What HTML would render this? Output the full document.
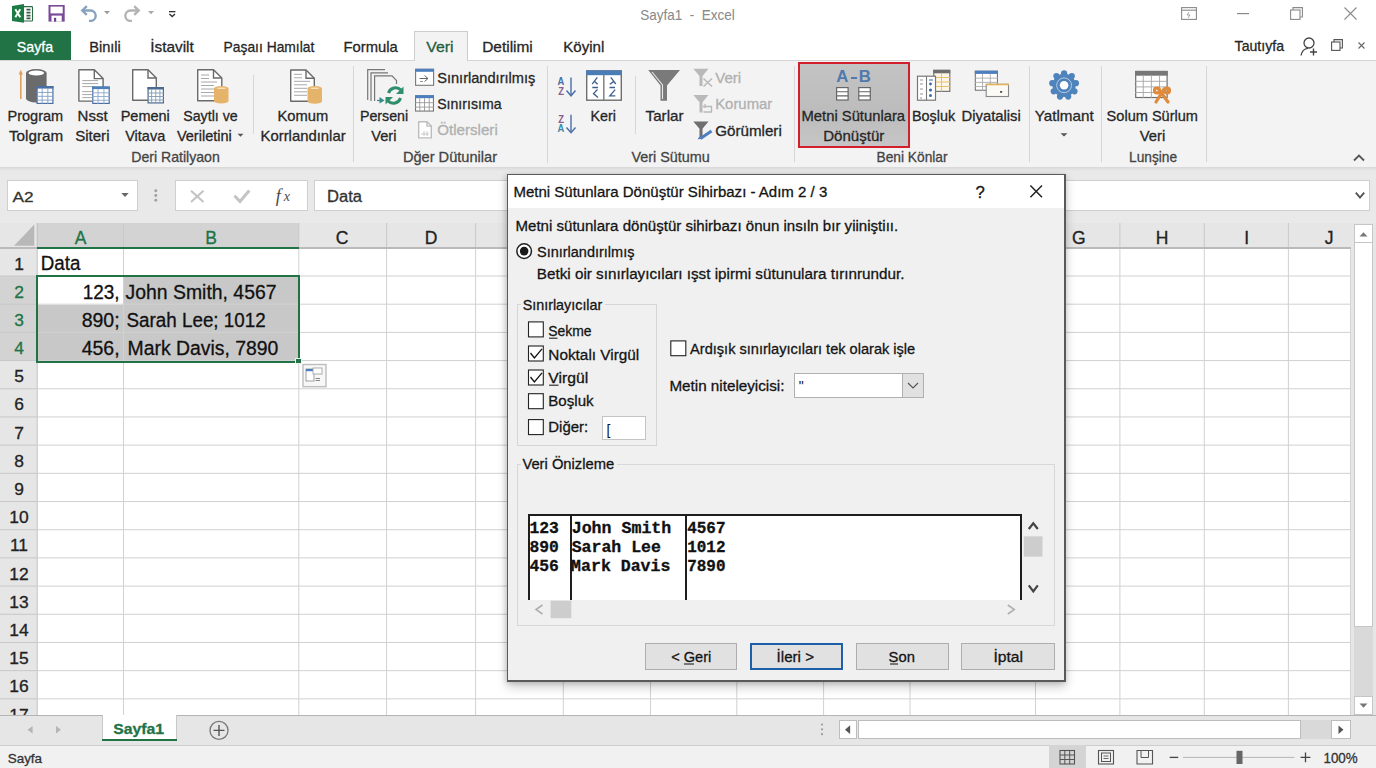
<!DOCTYPE html>
<html><head><meta charset="utf-8">
<style>
*{box-sizing:border-box}
html,body{margin:0;padding:0}
body{width:1376px;height:768px;position:relative;overflow:hidden;background:#fff;font-family:"Liberation Sans",sans-serif;color:#222}
.a{position:absolute}
.t{position:absolute;white-space:nowrap;line-height:1}
svg{position:absolute;overflow:visible}
svg.tx{pointer-events:none}
u{text-decoration:underline;text-underline-offset:2px}
</style></head><body>
<div class="a" style="left:0px;top:0px;width:1376px;height:60px;background:#fff"></div>
<div class="a" style="left:0px;top:60px;width:1376px;height:1px;background:#d5d5d5"></div>
<div class="a" style="left:0px;top:61px;width:1376px;height:106px;background:#f3f3f3"></div>
<div class="a" style="left:0px;top:167px;width:1376px;height:56px;background:#e9e9e9"></div>
<div class="a" style="left:0px;top:167px;width:1376px;height:4px;background:linear-gradient(#d8d8d8,#e9e9e9)"></div>
<div class="a" style="left:0px;top:223px;width:1376px;height:492px;background:#fff"></div>
<div class="a" style="left:0px;top:715px;width:1376px;height:30px;background:#e6e6e6"></div>
<div class="a" style="left:0px;top:715px;width:1376px;height:1px;background:#c8c8c8"></div>
<div class="a" style="left:0px;top:745px;width:1376px;height:23px;background:#f1f1f1"></div>
<div class="a" style="left:0px;top:744.6px;width:1376px;height:1.3px;background:#cdcdcd"></div>
<svg class="tx" style="left:0;top:0" width="1376" height="768"><text x="687.50" y="19.80" text-anchor="middle" font-size="15" font-weight="400" font-family="Liberation Sans" fill="#8a8a8a" stroke="#8a8a8a" stroke-width="0.05" textLength="94.6" lengthAdjust="spacingAndGlyphs" style="white-space:pre;">Sayfa1  -  Excel</text></svg>
<svg style="left:12px;top:4px;" width="21" height="19" viewBox="0 0 21 19">
<rect x="11.5" y="2.6" width="9" height="14.4" rx="0.8" fill="#fff" stroke="#2b6b45" stroke-width="1.1"/>
<path d="M14.5 5.6h4M14.5 8.6h4M14.5 11.6h4M14.5 14.4h4" stroke="#3a5a48" stroke-width="1.6"/>
<path d="M0 2 L12 0 V18.8 L0 17Z" fill="#1e7a45"/>
<path d="M3.3 5.2 L8.3 13.3 M8.3 5.2 L3.3 13.3" stroke="#f4fff8" stroke-width="2"/>
</svg>
<svg style="left:48px;top:5px;" width="17" height="17" viewBox="0 0 17 17">
<rect x="0.5" y="0" width="16.2" height="16.6" fill="#7a4a98"/>
<rect x="2.5" y="1.6" width="12.2" height="6.8" fill="#fff"/>
<rect x="3.5" y="10.6" width="10.2" height="6" fill="#fff"/>
<rect x="6" y="12.8" width="2.2" height="3.8" fill="#6a4088"/>
</svg>
<svg style="left:80px;top:5px;" width="18" height="17" viewBox="0 0 18 17"><path d="M3 5.5 H10.5 A5.2 5.2 0 0 1 10.5 15.9 H9" fill="none" stroke="#87a3bd" stroke-width="2.4"/><path d="M6.8 1.2 L2.3 5.5 L6.8 9.8" fill="none" stroke="#87a3bd" stroke-width="2.4"/></svg>
<svg style="left:104px;top:11px;" width="7" height="4" viewBox="0 0 7 4"><path d="M0 0H6L3 3.2Z" fill="#9a9a9a"/></svg>
<svg style="left:123px;top:5px;" width="18" height="17" viewBox="0 0 18 17"><path d="M15 5.5 H7.5 A5.2 5.2 0 0 0 7.5 15.9 H9" fill="none" stroke="#b3b3b3" stroke-width="2.4"/><path d="M11.2 1.2 L15.7 5.5 L11.2 9.8" fill="none" stroke="#b3b3b3" stroke-width="2.4"/></svg>
<svg style="left:147.5px;top:11px;" width="7" height="4" viewBox="0 0 7 4"><path d="M0 0H6L3 3.2Z" fill="#a8a8a8"/></svg>
<svg style="left:169px;top:11px;" width="7" height="7" viewBox="0 0 7 7"><rect x="0" y="0" width="6.4" height="1.3" fill="#333"/><path d="M0.4 3L3.2 5.6L6 3" fill="none" stroke="#333" stroke-width="1.4"/></svg>
<svg style="left:1181px;top:7px;" width="16" height="13" viewBox="0 0 16 13"><rect x="0.6" y="0.6" width="14.8" height="11.8" fill="none" stroke="#8a8a8a" stroke-width="1.1"/><path d="M0.6 3.2H15.4" stroke="#8a8a8a" stroke-width="1.1"/><path d="M8 5 L6 8 H9 L7 11" fill="none" stroke="#999" stroke-width="0.9"/></svg>
<svg style="left:1237px;top:13px;" width="12" height="1" viewBox="0 0 12 1"><rect x="0" y="0" width="12" height="1.2" fill="#8a8a8a"/></svg>
<svg style="left:1290px;top:7px;" width="13" height="13" viewBox="0 0 13 13"><rect x="0.6" y="3" width="9.4" height="9.4" fill="#fff" stroke="#8a8a8a" stroke-width="1.1"/><path d="M3 3V0.6H12.4V10H10" fill="none" stroke="#8a8a8a" stroke-width="1.1"/></svg>
<svg style="left:1344px;top:7px;" width="13" height="13" viewBox="0 0 13 13"><path d="M0.5 0.5L12.5 12.5M12.5 0.5L0.5 12.5" stroke="#8a8a8a" stroke-width="1.1"/></svg>
<div class="a" style="left:0px;top:31px;width:71px;height:29px;background:#217346"></div>
<svg class="tx" style="left:0;top:0" width="1376" height="768"><text x="34.95" y="51.50" text-anchor="middle" font-size="15" font-weight="400" font-family="Liberation Sans" fill="#fff" stroke="#fff" stroke-width="0.3" textLength="36.3" lengthAdjust="spacingAndGlyphs" style="white-space:pre;">Sayfa</text></svg>
<div class="a" style="left:413.5px;top:31px;width:54.5px;height:30px;background:#f3f3f3;border:1px solid #cdcdcd;border-bottom:none"></div>
<svg class="tx" style="left:0;top:0" width="1376" height="768"><text x="105.00" y="51.50" text-anchor="middle" font-size="15" font-weight="400" font-family="Liberation Sans" fill="#262626" stroke="#262626" stroke-width="0.3" textLength="31.6" lengthAdjust="spacingAndGlyphs" style="white-space:pre;">Binıli</text></svg>
<svg class="tx" style="left:0;top:0" width="1376" height="768"><text x="172.00" y="51.50" text-anchor="middle" font-size="15" font-weight="400" font-family="Liberation Sans" fill="#262626" stroke="#262626" stroke-width="0.3" textLength="43.6" lengthAdjust="spacingAndGlyphs" style="white-space:pre;">İstavilt</text></svg>
<svg class="tx" style="left:0;top:0" width="1376" height="768"><text x="268.95" y="51.50" text-anchor="middle" font-size="15" font-weight="400" font-family="Liberation Sans" fill="#262626" stroke="#262626" stroke-width="0.3" textLength="90.7" lengthAdjust="spacingAndGlyphs" style="white-space:pre;">Paşaıı Hamılat</text></svg>
<svg class="tx" style="left:0;top:0" width="1376" height="768"><text x="370.70" y="51.50" text-anchor="middle" font-size="15" font-weight="400" font-family="Liberation Sans" fill="#262626" stroke="#262626" stroke-width="0.3" textLength="54.2" lengthAdjust="spacingAndGlyphs" style="white-space:pre;">Formula</text></svg>
<svg class="tx" style="left:0;top:0" width="1376" height="768"><text x="439.85" y="51.50" text-anchor="middle" font-size="15" font-weight="400" font-family="Liberation Sans" fill="#1f6040" stroke="#1f6040" stroke-width="0.3" textLength="27.3" lengthAdjust="spacingAndGlyphs" style="white-space:pre;">Veri</text></svg>
<svg class="tx" style="left:0;top:0" width="1376" height="768"><text x="507.50" y="51.50" text-anchor="middle" font-size="15" font-weight="400" font-family="Liberation Sans" fill="#262626" stroke="#262626" stroke-width="0.3" textLength="50.6" lengthAdjust="spacingAndGlyphs" style="white-space:pre;">Detilimi</text></svg>
<svg class="tx" style="left:0;top:0" width="1376" height="768"><text x="583.75" y="51.50" text-anchor="middle" font-size="15" font-weight="400" font-family="Liberation Sans" fill="#262626" stroke="#262626" stroke-width="0.3" textLength="41.1" lengthAdjust="spacingAndGlyphs" style="white-space:pre;">Köyinl</text></svg>
<svg class="tx" style="left:0;top:0" width="1376" height="768"><text x="1259.30" y="51.00" text-anchor="middle" font-size="15" font-weight="400" font-family="Liberation Sans" fill="#262626" stroke="#262626" stroke-width="0.3" textLength="49.4" lengthAdjust="spacingAndGlyphs" style="white-space:pre;">Tautıyfa</text></svg>
<svg style="left:1300px;top:37px;" width="18" height="19" viewBox="0 0 18 19"><circle cx="9" cy="6" r="5" fill="none" stroke="#444" stroke-width="1.3"/><path d="M1 18.5 C2 13 5 11.5 8 11.3" fill="none" stroke="#444" stroke-width="1.3"/><path d="M13.5 11.5V18.5M10 15H17" stroke="#444" stroke-width="1.4"/></svg>
<svg style="left:1331px;top:39px;" width="12" height="12" viewBox="0 0 12 12"><rect x="0.6" y="3" width="8.4" height="8.4" fill="#fff" stroke="#555" stroke-width="1.1"/><path d="M3 3V0.6H11.4V9H9" fill="none" stroke="#555" stroke-width="1.1"/></svg>
<svg style="left:1358px;top:42px;" width="7" height="7" viewBox="0 0 7 7"><path d="M0.5 0.5L6.5 6.5M6.5 0.5L0.5 6.5" stroke="#666" stroke-width="1.1"/></svg>
<svg style="left:0;top:0" width="1376" height="200" viewBox="0 0 1376 200"><path d="M20.8 99V72" stroke="#e0a060" stroke-width="1.6"/><path d="M18.6 74.5L20.8 69.8L23 74.5Z" fill="#e0a060"/><path d="M26 73.0V98.5A10.3 4.0 0 0 0 46.6 98.5V73.0Z" fill="#6b6b6b"/><ellipse cx="36.3" cy="73.0" rx="10.3" ry="4.0" fill="#6b6b6b"/><ellipse cx="36.3" cy="73.0" rx="7.800000000000001" ry="2.5" fill="#fff"/><rect x="37.1" y="86.6" width="15.8" height="16.8" fill="#fff" stroke="#4a6fa5" stroke-width="1.2"/><rect x="36.5" y="86" width="17" height="2.6" fill="#4a6fa5"/><path d="M36.5 92.45H53.5" stroke="#7f9cc4" stroke-width="0.9"/><path d="M36.5 96.30H53.5" stroke="#7f9cc4" stroke-width="0.9"/><path d="M36.5 100.15H53.5" stroke="#7f9cc4" stroke-width="0.9"/><path d="M42.17 88.6V104" stroke="#7f9cc4" stroke-width="0.9"/><path d="M47.83 88.6V104" stroke="#7f9cc4" stroke-width="0.9"/><path d="M78.9 69.8H94.30000000000001L103.10000000000001 78.6V101.1H78.9Z" fill="#fff" stroke="#6a6a6a" stroke-width="1.4" stroke-linejoin="round"/><path d="M94.30000000000001 69.8V78.6H103.10000000000001" fill="none" stroke="#6a6a6a" stroke-width="1.4"/><path d="M82.2 80.6H98.2" stroke="#a8a8a8" stroke-width="1"/><path d="M82.2 83.6H98.2" stroke="#a8a8a8" stroke-width="1"/><path d="M82.2 86.6H94.2" stroke="#a8a8a8" stroke-width="1"/><path d="M82.2 91.6H92.2" stroke="#a8a8a8" stroke-width="1"/><path d="M82.2 94.6H92.2" stroke="#a8a8a8" stroke-width="1"/><path d="M82.2 97.6H92.2" stroke="#a8a8a8" stroke-width="1"/><rect x="92.8" y="87.1" width="16.400000000000002" height="16.3" fill="#fff" stroke="#4a6fa5" stroke-width="1.2"/><rect x="92.2" y="86.5" width="17.6" height="2.6" fill="#4a7fba"/><path d="M92.2 92.82H109.80000000000001" stroke="#8aa6cc" stroke-width="0.9"/><path d="M92.2 96.55H109.80000000000001" stroke="#8aa6cc" stroke-width="0.9"/><path d="M92.2 100.28H109.80000000000001" stroke="#8aa6cc" stroke-width="0.9"/><path d="M98.07 89.1V104.0" stroke="#8aa6cc" stroke-width="0.9"/><path d="M103.93 89.1V104.0" stroke="#8aa6cc" stroke-width="0.9"/><path d="M132.7 69.7H148L156.3 78V100.3H132.7Z" fill="#fff" stroke="#6a6a6a" stroke-width="1.4" stroke-linejoin="round"/><path d="M148 69.7V78H156.3" fill="none" stroke="#6a6a6a" stroke-width="1.4"/><rect x="148.1" y="87.6" width="15.3" height="15.3" fill="#fff" stroke="#4a6a90" stroke-width="1.2"/><rect x="147.5" y="87" width="16.5" height="2.5" fill="#4a6a90"/><path d="M147.5 93.00H164.0" stroke="#7f9ab8" stroke-width="0.9"/><path d="M147.5 96.50H164.0" stroke="#7f9ab8" stroke-width="0.9"/><path d="M147.5 100.00H164.0" stroke="#7f9ab8" stroke-width="0.9"/><path d="M151.62 89.5V103.5" stroke="#7f9ab8" stroke-width="0.9"/><path d="M155.75 89.5V103.5" stroke="#7f9ab8" stroke-width="0.9"/><path d="M159.88 89.5V103.5" stroke="#7f9ab8" stroke-width="0.9"/><path d="M197.7 69.7H213.5L221.8 78V100.8H197.7Z" fill="#fff" stroke="#6a6a6a" stroke-width="1.4" stroke-linejoin="round"/><path d="M213.5 69.7V78H221.8" fill="none" stroke="#6a6a6a" stroke-width="1.4"/><path d="M201 75H209" stroke="#a8a8a8" stroke-width="1"/><path d="M201 78.5H209" stroke="#a8a8a8" stroke-width="1"/><path d="M201 82H217" stroke="#a8a8a8" stroke-width="1"/><path d="M201 85.5H214" stroke="#a8a8a8" stroke-width="1"/><path d="M201 89H214" stroke="#a8a8a8" stroke-width="1"/><path d="M201 92.5H214" stroke="#a8a8a8" stroke-width="1"/><path d="M201 96H214" stroke="#a8a8a8" stroke-width="1"/><path d="M214 88.25V101.25A7.25 2.25 0 0 0 228.5 101.25V88.25Z" fill="#e5b46a"/><ellipse cx="221.25" cy="88.25" rx="7.25" ry="2.25" fill="#e5b46a"/><ellipse cx="221.25" cy="88.25" rx="4.75" ry="0.75" fill="#f6e3c0"/><path d="M290.7 70.0H306L314.3 78.3V101.3H290.7Z" fill="#fff" stroke="#6a6a6a" stroke-width="1.4" stroke-linejoin="round"/><path d="M306 70.0V78.3H314.3" fill="none" stroke="#6a6a6a" stroke-width="1.4"/><path d="M294 74.3H302" stroke="#a8a8a8" stroke-width="1"/><path d="M294 77.8H302" stroke="#a8a8a8" stroke-width="1"/><path d="M294 81.3H310" stroke="#a8a8a8" stroke-width="1"/><path d="M294 84.8H307" stroke="#a8a8a8" stroke-width="1"/><path d="M294 88.3H307" stroke="#a8a8a8" stroke-width="1"/><path d="M294 91.8H307" stroke="#a8a8a8" stroke-width="1"/><path d="M294 95.3H307" stroke="#a8a8a8" stroke-width="1"/><path d="M307.5 88.25V101.45A7.25 2.25 0 0 0 322.0 101.45V88.25Z" fill="#e5b46a"/><ellipse cx="314.75" cy="88.25" rx="7.25" ry="2.25" fill="#e5b46a"/><ellipse cx="314.75" cy="88.25" rx="4.75" ry="0.75" fill="#f6e3c0"/><path d="M367.7 100V69.7H385" fill="none" stroke="#777" stroke-width="1.2"/><path d="M371 101V72.8H388" fill="none" stroke="#777" stroke-width="1.2"/><path d="M374.6 101V75.8H392L396.5 80.5V84" fill="none" stroke="#777" stroke-width="1.2"/><path d="M377 100.5H381" stroke="#3a8a8a" stroke-width="1.2"/><path d="M379.5 97L384.5 100.5L379.5 103.5Z" fill="#3a8a8a"/><path d="M388.5 93 A7.5 7.5 0 0 1 401 90" fill="none" stroke="#2f8f6c" stroke-width="3"/><path d="M403.5 86.5V94H396Z" fill="#2f8f6c"/><path d="M400.5 98 A7.5 7.5 0 0 1 388 101" fill="none" stroke="#2f8f6c" stroke-width="3"/><path d="M385.5 104.5V97H393Z" fill="#2f8f6c"/><rect x="415.6" y="69.3" width="18" height="16" fill="#fff" stroke="#777" stroke-width="1.1"/><rect x="415" y="68.8" width="19" height="3" fill="#4d7fbf"/><path d="M419.5 78.5H428M424.5 75.5L428 78.5L424.5 81.5" fill="none" stroke="#666" stroke-width="1"/><path d="M420 81.5H423" stroke="#888" stroke-width="0.9"/><rect x="415.55" y="95.75" width="17.9" height="15.299999999999999" fill="#fff" stroke="#777" stroke-width="1.1"/><rect x="415" y="95.2" width="19" height="3" fill="#4d7fbf"/><path d="M415 102.67H434" stroke="#999" stroke-width="0.9"/><path d="M415 107.13H434" stroke="#999" stroke-width="0.9"/><path d="M419.75 98.2V111.6" stroke="#999" stroke-width="0.9"/><path d="M424.50 98.2V111.6" stroke="#999" stroke-width="0.9"/><path d="M429.25 98.2V111.6" stroke="#999" stroke-width="0.9"/><path d="M418.7 121.8H427L431.3 126.1V137.9H418.7Z" fill="#fff" stroke="#bdbdbd" stroke-width="1.4" stroke-linejoin="round"/><path d="M427 121.8V126.1H431.3" fill="none" stroke="#bdbdbd" stroke-width="1.4"/><path d="M421 134H429M424 131V136M427 131V136" stroke="#c8c8c8" stroke-width="1"/><path d="M571 77.6V95" stroke="#4a6ea8" stroke-width="1.4"/><path d="M566.5 90.5L571 95.8L575.5 90.5" fill="none" stroke="#4a6ea8" stroke-width="1.4"/><path d="M571 114.7V132" stroke="#4a6ea8" stroke-width="1.4"/><path d="M566.5 127.5L571 132.6L575.5 127.5" fill="none" stroke="#4a6ea8" stroke-width="1.4"/></svg>
<div class="t" style="left:61.40px;width:1000px;text-align:center;top:76.25px;font-size:11px;color:#4a6ea8;font-weight:700;font-family:'Liberation Sans';transform:scaleX(0.85)">A</div>
<div class="t" style="left:61.40px;width:1000px;text-align:center;top:86.15px;font-size:11px;color:#8a5c8a;font-weight:700;font-family:'Liberation Sans';transform:scaleX(0.85)">Z</div>
<div class="t" style="left:61.40px;width:1000px;text-align:center;top:113.95px;font-size:11px;color:#8a5c8a;font-weight:700;font-family:'Liberation Sans';transform:scaleX(0.85)">Z</div>
<div class="t" style="left:61.40px;width:1000px;text-align:center;top:122.95px;font-size:11px;color:#3a8aaa;font-weight:700;font-family:'Liberation Sans';transform:scaleX(0.85)">A</div>
<svg style="left:0;top:0" width="1376" height="200" viewBox="0 0 1376 200"><rect x="586.7" y="70.9" width="34.6" height="29.3" fill="#fff" stroke="#6e6e6e" stroke-width="1.4"/><rect x="586" y="70.4" width="36" height="4.8" fill="#4a7db5"/><path d="M603.8 75V100.5" stroke="#7a7a7a" stroke-width="1.4"/><path d="M597.3 77.4L592.2 84.2M594.4 81.2L597.6 84.2M592.3 87.5H598M597.5 89.5L593.5 93.6L598 97.4" fill="none" stroke="#3d5f8f" stroke-width="1.3"/><path d="M610.8 77.4L615.8 84M609.8 84.3L613.6 81.6M609.5 87.5H615M615.2 89.6L609.8 95.8H615.3" fill="none" stroke="#3d5f8f" stroke-width="1.3"/><path d="M648.2 70H680L667 85.5V100.8H660.5V85.5Z" fill="#7a7a7a"/><path d="M652 72L662.5 85V99" fill="none" stroke="#e8e8e8" stroke-width="1.1"/><path d="M693.3 68.7H708.5L702.5 76V86H699.5V76Z" fill="#b9b9b9"/><path d="M703.5 78.5L712 86.5M712 78.5L703.5 86.5" stroke="#b9b9b9" stroke-width="1.5"/><path d="M693.3 94.9H708.5L702.5 102.2V112.4H699.5V102.2Z" fill="#b9b9b9"/><path d="M703 106.5H711.5V112H703.5M705 104V108" fill="none" stroke="#b9b9b9" stroke-width="1.3"/><path d="M693.3 121.4H708.5L702.5 128.7V137.5H699.5V128.7Z" fill="#6f6f6f"/><path d="M700.5 138.5L711.5 131" stroke="#4d7fbf" stroke-width="3"/><path d="M700 136L697.5 139.3L701.5 139Z" fill="#4d7fbf"/></svg>
<div class="a" style="left:797.5px;top:62.2px;width:112.5px;height:85.6px;background:linear-gradient(180deg,#c3c3c3,#bcbcbc 60%,#c6c6c6);border:2.8px solid #d21f2b"></div>
<div class="t" style="left:342.20px;width:1000px;text-align:center;top:68.82px;font-size:16.8px;color:#5079ad;font-weight:700;font-family:'Liberation Sans';">A</div>
<div class="a" style="left:851px;top:76.6px;width:5.8px;height:2px;background:#5079ad"></div>
<div class="t" style="left:364.80px;width:1000px;text-align:center;top:68.82px;font-size:16.8px;color:#5079ad;font-weight:700;font-family:'Liberation Sans';">B</div>
<svg style="left:0;top:0" width="1376" height="200" viewBox="0 0 1376 200"><rect x="836.6" y="87.6" width="11.5" height="12.4" fill="#fff" stroke="#666" stroke-width="1.2"/><path d="M836.6 91.8H848.1M836.6 95.9H848.1" stroke="#666" stroke-width="1.1"/><rect x="858.8" y="87.6" width="11.5" height="12.4" fill="#fff" stroke="#666" stroke-width="1.2"/><path d="M858.8 91.8H870.3M858.8 95.9H870.3" stroke="#666" stroke-width="1.1"/><rect x="933.8" y="70.4" width="16" height="21" fill="#fdf6e6" stroke="#777" stroke-width="1.2"/><rect x="933.2" y="69.8" width="17" height="3.5" fill="#6e6e6e"/><path d="M933.2 77.5H950.2M933.2 82H950.2M933.2 86.5H950.2" stroke="#e8c070" stroke-width="1"/><path d="M941.5 73V91.5" stroke="#e8c070" stroke-width="1"/><rect x="917.5" y="76.2" width="18" height="24" fill="#fff" stroke="#777" stroke-width="1.2"/><path d="M926.5 76.2V100.2" stroke="#777" stroke-width="1.1"/><path d="M920 80H923M920 84H923M920 89H923M920 94H923M920 98H922" stroke="#8a8a8a" stroke-width="0.9"/><circle cx="930.5" cy="84" r="1.4" fill="#3a6aa8"/><circle cx="930.5" cy="90" r="1.6" fill="#3a6aa8"/><circle cx="930.5" cy="95.5" r="1.5" fill="#3a6aa8"/><path d="M929 80H933" stroke="#3a6aa8" stroke-width="1"/><rect x="975.3499999999999" y="71.25" width="22.099999999999998" height="19.0" fill="#fff" stroke="#777" stroke-width="1.1"/><rect x="974.8" y="70.7" width="23.2" height="3.2" fill="#4d7fbf"/><path d="M974.8 78.12H998.0" stroke="#aaa" stroke-width="0.9"/><path d="M974.8 82.35H998.0" stroke="#aaa" stroke-width="0.9"/><path d="M974.8 86.58H998.0" stroke="#aaa" stroke-width="0.9"/><path d="M982.53 73.9V90.80000000000001" stroke="#aaa" stroke-width="0.9"/><path d="M990.27 73.9V90.80000000000001" stroke="#aaa" stroke-width="0.9"/><rect x="986.2" y="84.3" width="22.3" height="12.2" fill="#fbfaf5" stroke="#888" stroke-width="1.1"/><path d="M985.7 84.5H1009" stroke="#e3b25f" stroke-width="1.6"/><rect x="1000" y="91" width="2.2" height="1.8" fill="#555"/><g transform="translate(1064.1 85.3)" fill="#4f83bb"><circle cx="0.00" cy="-12.00" r="3.1"/><circle cx="7.71" cy="-9.19" r="3.1"/><circle cx="11.82" cy="-2.08" r="3.1"/><circle cx="10.39" cy="6.00" r="3.1"/><circle cx="4.10" cy="11.28" r="3.1"/><circle cx="-4.10" cy="11.28" r="3.1"/><circle cx="-10.39" cy="6.00" r="3.1"/><circle cx="-11.82" cy="-2.08" r="3.1"/><circle cx="-7.71" cy="-9.19" r="3.1"/><circle r="11.6"/></g><circle cx="1064.1" cy="85.3" r="7.4" fill="none" stroke="#b3cbe4" stroke-width="1"/><circle cx="1064.1" cy="85.3" r="4.3" fill="#fff"/><rect x="1135.6999999999998" y="71.5" width="31.400000000000002" height="26.0" fill="#fff" stroke="#6e6e6e" stroke-width="1.2"/><rect x="1135.1" y="70.9" width="32.6" height="4.8" fill="#777"/><path d="M1135.1 81.30H1167.6999999999998" stroke="#a5a5a5" stroke-width="0.9"/><path d="M1135.1 86.90H1167.6999999999998" stroke="#a5a5a5" stroke-width="0.9"/><path d="M1135.1 92.50H1167.6999999999998" stroke="#a5a5a5" stroke-width="0.9"/><path d="M1143.25 75.7V98.10000000000001" stroke="#a5a5a5" stroke-width="0.9"/><path d="M1151.40 75.7V98.10000000000001" stroke="#a5a5a5" stroke-width="0.9"/><path d="M1159.55 75.7V98.10000000000001" stroke="#a5a5a5" stroke-width="0.9"/><g stroke="#e08a3c" stroke-width="3.2" fill="none" stroke-linecap="round"><path d="M1156 102L1164 89"/><path d="M1168 102L1158.5 89"/><circle cx="1157" cy="90.5" r="2.5"/><circle cx="1167" cy="90.5" r="2.5"/></g><path d="M237.5 133.8H243.5L240.5 136.8Z" fill="#555"/><path d="M1060.5 133.3H1067.5L1064 136.6Z" fill="#555"/><path d="M1354 160.5L1359 155.5L1364 160.5" fill="none" stroke="#555" stroke-width="1.8"/></svg>
<div class="a" style="left:253.0px;top:75px;width:1px;height:59px;background:#d6d6d6"></div>
<div class="a" style="left:353.0px;top:66px;width:1px;height:96px;background:#d6d6d6"></div>
<div class="a" style="left:546.5px;top:66px;width:1px;height:97px;background:#d6d6d6"></div>
<div class="a" style="left:635.0px;top:76px;width:1px;height:58px;background:#d6d6d6"></div>
<div class="a" style="left:794.0px;top:66px;width:1px;height:96px;background:#d6d6d6"></div>
<div class="a" style="left:1028.5px;top:66px;width:1px;height:96px;background:#d6d6d6"></div>
<div class="a" style="left:1100.5px;top:66px;width:1px;height:96px;background:#d6d6d6"></div>
<div class="a" style="left:1206.0px;top:66px;width:1px;height:96px;background:#d6d6d6"></div>
<svg class="tx" style="left:0;top:0" width="1376" height="768"><text x="35.35" y="120.80" text-anchor="middle" font-size="14.8" font-weight="400" font-family="Liberation Sans" fill="#262626" stroke="#262626" stroke-width="0.3" textLength="55.7" lengthAdjust="spacingAndGlyphs" style="white-space:pre;">Program</text></svg>
<svg class="tx" style="left:0;top:0" width="1376" height="768"><text x="36.10" y="140.50" text-anchor="middle" font-size="14.8" font-weight="400" font-family="Liberation Sans" fill="#262626" stroke="#262626" stroke-width="0.3" textLength="54.2" lengthAdjust="spacingAndGlyphs" style="white-space:pre;">Tolgram</text></svg>
<svg class="tx" style="left:0;top:0" width="1376" height="768"><text x="92.60" y="120.80" text-anchor="middle" font-size="14.8" font-weight="400" font-family="Liberation Sans" fill="#262626" stroke="#262626" stroke-width="0.3" textLength="30.0" lengthAdjust="spacingAndGlyphs" style="white-space:pre;">Nsst</text></svg>
<svg class="tx" style="left:0;top:0" width="1376" height="768"><text x="92.35" y="140.50" text-anchor="middle" font-size="14.8" font-weight="400" font-family="Liberation Sans" fill="#262626" stroke="#262626" stroke-width="0.3" textLength="34.3" lengthAdjust="spacingAndGlyphs" style="white-space:pre;">Siteri</text></svg>
<svg class="tx" style="left:0;top:0" width="1376" height="768"><text x="145.25" y="120.80" text-anchor="middle" font-size="14.8" font-weight="400" font-family="Liberation Sans" fill="#262626" stroke="#262626" stroke-width="0.3" textLength="49.1" lengthAdjust="spacingAndGlyphs" style="white-space:pre;">Pemeni</text></svg>
<svg class="tx" style="left:0;top:0" width="1376" height="768"><text x="145.25" y="140.50" text-anchor="middle" font-size="14.8" font-weight="400" font-family="Liberation Sans" fill="#262626" stroke="#262626" stroke-width="0.3" textLength="40.1" lengthAdjust="spacingAndGlyphs" style="white-space:pre;">Vitava</text></svg>
<svg class="tx" style="left:0;top:0" width="1376" height="768"><text x="210.50" y="120.80" text-anchor="middle" font-size="14.8" font-weight="400" font-family="Liberation Sans" fill="#262626" stroke="#262626" stroke-width="0.3" textLength="54.6" lengthAdjust="spacingAndGlyphs" style="white-space:pre;">Saytlı ve</text></svg>
<svg class="tx" style="left:0;top:0" width="1376" height="768"><text x="204.35" y="140.50" text-anchor="middle" font-size="14.8" font-weight="400" font-family="Liberation Sans" fill="#262626" stroke="#262626" stroke-width="0.3" textLength="54.9" lengthAdjust="spacingAndGlyphs" style="white-space:pre;">Veriletini</text></svg>
<svg class="tx" style="left:0;top:0" width="1376" height="768"><text x="302.85" y="120.80" text-anchor="middle" font-size="14.8" font-weight="400" font-family="Liberation Sans" fill="#262626" stroke="#262626" stroke-width="0.3" textLength="50.7" lengthAdjust="spacingAndGlyphs" style="white-space:pre;">Komum</text></svg>
<svg class="tx" style="left:0;top:0" width="1376" height="768"><text x="303.05" y="140.50" text-anchor="middle" font-size="14.8" font-weight="400" font-family="Liberation Sans" fill="#262626" stroke="#262626" stroke-width="0.3" textLength="85.1" lengthAdjust="spacingAndGlyphs" style="white-space:pre;">Korrlandınlar</text></svg>
<svg class="tx" style="left:0;top:0" width="1376" height="768"><text x="384.05" y="120.80" text-anchor="middle" font-size="14.8" font-weight="400" font-family="Liberation Sans" fill="#262626" stroke="#262626" stroke-width="0.3" textLength="48.3" lengthAdjust="spacingAndGlyphs" style="white-space:pre;">Perseni</text></svg>
<svg class="tx" style="left:0;top:0" width="1376" height="768"><text x="383.80" y="140.50" text-anchor="middle" font-size="14.8" font-weight="400" font-family="Liberation Sans" fill="#262626" stroke="#262626" stroke-width="0.3" textLength="25.2" lengthAdjust="spacingAndGlyphs" style="white-space:pre;">Veri</text></svg>
<svg class="tx" style="left:0;top:0" width="1376" height="768"><text x="603.30" y="120.80" text-anchor="middle" font-size="14.8" font-weight="400" font-family="Liberation Sans" fill="#262626" stroke="#262626" stroke-width="0.3" textLength="25.4" lengthAdjust="spacingAndGlyphs" style="white-space:pre;">Keri</text></svg>
<svg class="tx" style="left:0;top:0" width="1376" height="768"><text x="664.55" y="120.80" text-anchor="middle" font-size="14.8" font-weight="400" font-family="Liberation Sans" fill="#262626" stroke="#262626" stroke-width="0.3" textLength="37.9" lengthAdjust="spacingAndGlyphs" style="white-space:pre;">Tarlar</text></svg>
<svg class="tx" style="left:0;top:0" width="1376" height="768"><text x="853.30" y="120.80" text-anchor="middle" font-size="14.8" font-weight="400" font-family="Liberation Sans" fill="#262626" stroke="#262626" stroke-width="0.3" textLength="103.6" lengthAdjust="spacingAndGlyphs" style="white-space:pre;">Metni Sütunlara</text></svg>
<svg class="tx" style="left:0;top:0" width="1376" height="768"><text x="853.75" y="140.50" text-anchor="middle" font-size="14.8" font-weight="400" font-family="Liberation Sans" fill="#262626" stroke="#262626" stroke-width="0.3" textLength="61.1" lengthAdjust="spacingAndGlyphs" style="white-space:pre;">Dönüştür</text></svg>
<svg class="tx" style="left:0;top:0" width="1376" height="768"><text x="933.60" y="120.80" text-anchor="middle" font-size="14.8" font-weight="400" font-family="Liberation Sans" fill="#262626" stroke="#262626" stroke-width="0.3" textLength="43.2" lengthAdjust="spacingAndGlyphs" style="white-space:pre;">Boşluk</text></svg>
<svg class="tx" style="left:0;top:0" width="1376" height="768"><text x="991.15" y="120.80" text-anchor="middle" font-size="14.8" font-weight="400" font-family="Liberation Sans" fill="#262626" stroke="#262626" stroke-width="0.3" textLength="59.3" lengthAdjust="spacingAndGlyphs" style="white-space:pre;">Diyatalisi</text></svg>
<svg class="tx" style="left:0;top:0" width="1376" height="768"><text x="1064.20" y="120.80" text-anchor="middle" font-size="14.8" font-weight="400" font-family="Liberation Sans" fill="#262626" stroke="#262626" stroke-width="0.3" textLength="59.0" lengthAdjust="spacingAndGlyphs" style="white-space:pre;">Yatlmant</text></svg>
<svg class="tx" style="left:0;top:0" width="1376" height="768"><text x="1152.30" y="120.80" text-anchor="middle" font-size="14.8" font-weight="400" font-family="Liberation Sans" fill="#262626" stroke="#262626" stroke-width="0.3" textLength="91.4" lengthAdjust="spacingAndGlyphs" style="white-space:pre;">Solum Sürlum</text></svg>
<svg class="tx" style="left:0;top:0" width="1376" height="768"><text x="1152.55" y="140.50" text-anchor="middle" font-size="14.8" font-weight="400" font-family="Liberation Sans" fill="#262626" stroke="#262626" stroke-width="0.3" textLength="25.5" lengthAdjust="spacingAndGlyphs" style="white-space:pre;">Veri</text></svg>
<svg class="tx" style="left:0;top:0" width="1376" height="768"><text x="486.25" y="82.60" text-anchor="middle" font-size="14.8" font-weight="400" font-family="Liberation Sans" fill="#262626" stroke="#262626" stroke-width="0.3" textLength="98.1" lengthAdjust="spacingAndGlyphs" style="white-space:pre;">Sınırlandırılmış</text></svg>
<svg class="tx" style="left:0;top:0" width="1376" height="768"><text x="469.35" y="109.20" text-anchor="middle" font-size="14.8" font-weight="400" font-family="Liberation Sans" fill="#262626" stroke="#262626" stroke-width="0.3" textLength="64.3" lengthAdjust="spacingAndGlyphs" style="white-space:pre;">Sınırısıma</text></svg>
<svg class="tx" style="left:0;top:0" width="1376" height="768"><text x="467.50" y="135.40" text-anchor="middle" font-size="14.8" font-weight="400" font-family="Liberation Sans" fill="#b0b0b0" stroke="#b0b0b0" stroke-width="0.3" textLength="60.6" lengthAdjust="spacingAndGlyphs" style="white-space:pre;">Ötlersleri</text></svg>
<svg class="tx" style="left:0;top:0" width="1376" height="768"><text x="728.15" y="82.60" text-anchor="middle" font-size="14.8" font-weight="400" font-family="Liberation Sans" fill="#b0b0b0" stroke="#b0b0b0" stroke-width="0.3" textLength="25.9" lengthAdjust="spacingAndGlyphs" style="white-space:pre;">Veri</text></svg>
<svg class="tx" style="left:0;top:0" width="1376" height="768"><text x="743.75" y="109.40" text-anchor="middle" font-size="14.8" font-weight="400" font-family="Liberation Sans" fill="#b0b0b0" stroke="#b0b0b0" stroke-width="0.3" textLength="57.1" lengthAdjust="spacingAndGlyphs" style="white-space:pre;">Korumar</text></svg>
<svg class="tx" style="left:0;top:0" width="1376" height="768"><text x="748.50" y="135.50" text-anchor="middle" font-size="14.8" font-weight="400" font-family="Liberation Sans" fill="#262626" stroke="#262626" stroke-width="0.3" textLength="66.6" lengthAdjust="spacingAndGlyphs" style="white-space:pre;">Görümleri</text></svg>
<svg class="tx" style="left:0;top:0" width="1376" height="768"><text x="175.50" y="162.00" text-anchor="middle" font-size="14.8" font-weight="400" font-family="Liberation Sans" fill="#444" stroke="#444" stroke-width="0.3" textLength="88.6" lengthAdjust="spacingAndGlyphs" style="white-space:pre;">Deri Ratilyaon</text></svg>
<svg class="tx" style="left:0;top:0" width="1376" height="768"><text x="450.00" y="162.00" text-anchor="middle" font-size="14.8" font-weight="400" font-family="Liberation Sans" fill="#444" stroke="#444" stroke-width="0.3" textLength="94.2" lengthAdjust="spacingAndGlyphs" style="white-space:pre;">Dğer Dütunilar</text></svg>
<svg class="tx" style="left:0;top:0" width="1376" height="768"><text x="670.65" y="162.00" text-anchor="middle" font-size="14.8" font-weight="400" font-family="Liberation Sans" fill="#444" stroke="#444" stroke-width="0.3" textLength="78.5" lengthAdjust="spacingAndGlyphs" style="white-space:pre;">Veri Sütumu</text></svg>
<svg class="tx" style="left:0;top:0" width="1376" height="768"><text x="912.05" y="162.00" text-anchor="middle" font-size="14.8" font-weight="400" font-family="Liberation Sans" fill="#444" stroke="#444" stroke-width="0.3" textLength="71.1" lengthAdjust="spacingAndGlyphs" style="white-space:pre;">Beni Könlar</text></svg>
<svg class="tx" style="left:0;top:0" width="1376" height="768"><text x="1153.05" y="162.00" text-anchor="middle" font-size="14.8" font-weight="400" font-family="Liberation Sans" fill="#444" stroke="#444" stroke-width="0.3" textLength="48.1" lengthAdjust="spacingAndGlyphs" style="white-space:pre;">Lunşine</text></svg>
<div class="a" style="left:6.5px;top:180px;width:131px;height:30.6px;background:#fff;border:1px solid #cfcfcf"></div>
<div class="a" style="left:175px;top:180px;width:133.3px;height:30.6px;background:#fff;border:1px solid #cfcfcf"></div>
<div class="a" style="left:313.5px;top:180px;width:1056px;height:30.6px;background:#fff;border:1px solid #cfcfcf"></div>
<svg class="tx" style="left:0;top:0" width="1376" height="768"><text x="23.05" y="201.60" text-anchor="middle" font-size="15.5" font-weight="400" font-family="Liberation Sans" fill="#333" stroke="#333" stroke-width="0.3" textLength="21.1" lengthAdjust="spacingAndGlyphs" style="white-space:pre;">A2</text></svg>
<svg style="left:0;top:0" width="1376" height="260" viewBox="0 0 1376 260"><path d="M121.3 193H128.7L125 197Z" fill="#666"/><circle cx="155.8" cy="190.8" r="1.45" fill="#a0a0a0"/><circle cx="155.8" cy="195.5" r="1.45" fill="#a0a0a0"/><circle cx="155.8" cy="200.2" r="1.45" fill="#a0a0a0"/><path d="M191 190.8L203.5 202M203.5 190.8L191 202" stroke="#c2c2c2" stroke-width="2"/><path d="M234.5 195.8L240 201.5L249.3 190.5" fill="none" stroke="#c4c4c4" stroke-width="3"/><path d="M1355.8 192.6L1360 197.6L1364.2 192.6" fill="none" stroke="#555" stroke-width="1.9"/></svg>
<div class="t" style="left:275.70px;top:187.00px;font-size:18px;color:#4a4a4a;font-weight:400;font-family:'Liberation Serif';font-style:italic">f</div>
<div class="t" style="left:283.70px;top:190.30px;font-size:14px;color:#4a4a4a;font-weight:400;font-family:'Liberation Serif';font-style:italic">x</div>
<svg class="tx" style="left:0;top:0" width="1376" height="768"><text x="344.50" y="201.80" text-anchor="middle" font-size="16" font-weight="400" font-family="Liberation Sans" fill="#333" stroke="#333" stroke-width="0.3" textLength="35.0" lengthAdjust="spacingAndGlyphs" style="white-space:pre;">Data</text></svg>
<div class="a" style="left:0px;top:223px;width:37.2px;height:492px;background:#e6e6e6"></div>
<div class="a" style="left:37.2px;top:223px;width:1313.4px;height:25px;background:#e6e6e6"></div>
<div class="a" style="left:37.2px;top:223px;width:261.6px;height:25px;background:#d3d3d3"></div>
<div class="a" style="left:0px;top:276px;width:37.2px;height:85.4px;background:#d3d3d3"></div>
<svg style="left:0;top:0" width="1376" height="768" viewBox="0 0 1376 768"><path d="M14 245.8L34.3 224.6V245.8Z" fill="#b8b8b8"/><path d="M123.5 223V248" stroke="#c9c9c9" stroke-width="1"/><path d="M298.8 223V248" stroke="#c9c9c9" stroke-width="1"/><path d="M386.6 223V248" stroke="#c9c9c9" stroke-width="1"/><path d="M475.6 223V248" stroke="#c9c9c9" stroke-width="1"/><path d="M563.3 223V248" stroke="#c9c9c9" stroke-width="1"/><path d="M1119.9 223V248" stroke="#c9c9c9" stroke-width="1"/><path d="M1204.3 223V248" stroke="#c9c9c9" stroke-width="1"/><path d="M1288.4 223V248" stroke="#c9c9c9" stroke-width="1"/><path d="M37.2 223V715" stroke="#c0c0c0" stroke-width="1"/></svg>
<div class="a" style="left:123.5px;top:276px;width:175.3px;height:85.4px;background:#c8c8c8"></div>
<div class="a" style="left:37.2px;top:304.5px;width:86.3px;height:56.9px;background:#c8c8c8"></div>
<svg style="left:0;top:0" width="1376" height="768" viewBox="0 0 1376 768"><path d="M37.2 276.00H1350.6" stroke="#d1d1d1" stroke-width="1"/><path d="M0 276.00H37.2" stroke="#c8c8c8" stroke-width="1"/><path d="M37.2 304.19H1350.6" stroke="#d1d1d1" stroke-width="1"/><path d="M0 304.19H37.2" stroke="#c8c8c8" stroke-width="1"/><path d="M37.2 332.38H1350.6" stroke="#d1d1d1" stroke-width="1"/><path d="M0 332.38H37.2" stroke="#c8c8c8" stroke-width="1"/><path d="M37.2 360.57H1350.6" stroke="#d1d1d1" stroke-width="1"/><path d="M0 360.57H37.2" stroke="#c8c8c8" stroke-width="1"/><path d="M37.2 388.76H1350.6" stroke="#d1d1d1" stroke-width="1"/><path d="M0 388.76H37.2" stroke="#c8c8c8" stroke-width="1"/><path d="M37.2 416.95H1350.6" stroke="#d1d1d1" stroke-width="1"/><path d="M0 416.95H37.2" stroke="#c8c8c8" stroke-width="1"/><path d="M37.2 445.14H1350.6" stroke="#d1d1d1" stroke-width="1"/><path d="M0 445.14H37.2" stroke="#c8c8c8" stroke-width="1"/><path d="M37.2 473.33H1350.6" stroke="#d1d1d1" stroke-width="1"/><path d="M0 473.33H37.2" stroke="#c8c8c8" stroke-width="1"/><path d="M37.2 501.52H1350.6" stroke="#d1d1d1" stroke-width="1"/><path d="M0 501.52H37.2" stroke="#c8c8c8" stroke-width="1"/><path d="M37.2 529.71H1350.6" stroke="#d1d1d1" stroke-width="1"/><path d="M0 529.71H37.2" stroke="#c8c8c8" stroke-width="1"/><path d="M37.2 557.90H1350.6" stroke="#d1d1d1" stroke-width="1"/><path d="M0 557.90H37.2" stroke="#c8c8c8" stroke-width="1"/><path d="M37.2 586.09H1350.6" stroke="#d1d1d1" stroke-width="1"/><path d="M0 586.09H37.2" stroke="#c8c8c8" stroke-width="1"/><path d="M37.2 614.28H1350.6" stroke="#d1d1d1" stroke-width="1"/><path d="M0 614.28H37.2" stroke="#c8c8c8" stroke-width="1"/><path d="M37.2 642.47H1350.6" stroke="#d1d1d1" stroke-width="1"/><path d="M0 642.47H37.2" stroke="#c8c8c8" stroke-width="1"/><path d="M37.2 670.66H1350.6" stroke="#d1d1d1" stroke-width="1"/><path d="M0 670.66H37.2" stroke="#c8c8c8" stroke-width="1"/><path d="M37.2 698.85H1350.6" stroke="#d1d1d1" stroke-width="1"/><path d="M0 698.85H37.2" stroke="#c8c8c8" stroke-width="1"/><path d="M123.5 248V715" stroke="#d1d1d1" stroke-width="1"/><path d="M298.8 248V715" stroke="#d1d1d1" stroke-width="1"/><path d="M386.6 248V715" stroke="#d1d1d1" stroke-width="1"/><path d="M475.6 248V715" stroke="#d1d1d1" stroke-width="1"/><path d="M563.3 248V715" stroke="#d1d1d1" stroke-width="1"/><path d="M650.5 248V715" stroke="#d1d1d1" stroke-width="1"/><path d="M736.8 248V715" stroke="#d1d1d1" stroke-width="1"/><path d="M823.6 248V715" stroke="#d1d1d1" stroke-width="1"/><path d="M910 248V715" stroke="#d1d1d1" stroke-width="1"/><path d="M1035.5 248V715" stroke="#d1d1d1" stroke-width="1"/><path d="M1119.9 248V715" stroke="#d1d1d1" stroke-width="1"/><path d="M1204.3 248V715" stroke="#d1d1d1" stroke-width="1"/><path d="M1288.4 248V715" stroke="#d1d1d1" stroke-width="1"/><path d="M1350.6 248V715" stroke="#d1d1d1" stroke-width="1"/></svg>
<div class="a" style="left:0px;top:247.3px;width:1350.6px;height:1.4px;background:#bababa"></div>
<div class="a" style="left:37.2px;top:247px;width:261.6px;height:2px;background:#217346"></div>
<svg class="tx" style="left:0;top:0" width="1376" height="768"><text x="80.60" y="243.80" text-anchor="middle" font-size="17.5" font-weight="400" font-family="Liberation Sans" fill="#217346" stroke="#217346" stroke-width="0.3" style="white-space:pre;">A</text></svg>
<svg class="tx" style="left:0;top:0" width="1376" height="768"><text x="211.00" y="243.80" text-anchor="middle" font-size="17.5" font-weight="400" font-family="Liberation Sans" fill="#217346" stroke="#217346" stroke-width="0.3" style="white-space:pre;">B</text></svg>
<svg class="tx" style="left:0;top:0" width="1376" height="768"><text x="342.00" y="243.80" text-anchor="middle" font-size="17.5" font-weight="400" font-family="Liberation Sans" fill="#222" stroke="#222" stroke-width="0.3" style="white-space:pre;">C</text></svg>
<svg class="tx" style="left:0;top:0" width="1376" height="768"><text x="431.00" y="243.80" text-anchor="middle" font-size="17.5" font-weight="400" font-family="Liberation Sans" fill="#222" stroke="#222" stroke-width="0.3" style="white-space:pre;">D</text></svg>
<svg class="tx" style="left:0;top:0" width="1376" height="768"><text x="1078.80" y="243.80" text-anchor="middle" font-size="17.5" font-weight="400" font-family="Liberation Sans" fill="#222" stroke="#222" stroke-width="0.3" style="white-space:pre;">G</text></svg>
<svg class="tx" style="left:0;top:0" width="1376" height="768"><text x="1162.00" y="243.80" text-anchor="middle" font-size="17.5" font-weight="400" font-family="Liberation Sans" fill="#222" stroke="#222" stroke-width="0.3" style="white-space:pre;">H</text></svg>
<svg class="tx" style="left:0;top:0" width="1376" height="768"><text x="1246.70" y="243.80" text-anchor="middle" font-size="17.5" font-weight="400" font-family="Liberation Sans" fill="#222" stroke="#222" stroke-width="0.3" style="white-space:pre;">I</text></svg>
<svg class="tx" style="left:0;top:0" width="1376" height="768"><text x="1329.00" y="243.80" text-anchor="middle" font-size="17.5" font-weight="400" font-family="Liberation Sans" fill="#222" stroke="#222" stroke-width="0.3" style="white-space:pre;">J</text></svg>
<svg class="tx" style="left:0;top:0" width="1376" height="768"><text x="19.00" y="269.50" text-anchor="middle" font-size="17.4" font-weight="400" font-family="Liberation Sans" fill="#222" stroke="#222" stroke-width="0.3" style="white-space:pre;">1</text></svg>
<svg class="tx" style="left:0;top:0" width="1376" height="768"><text x="19.00" y="297.69" text-anchor="middle" font-size="17.4" font-weight="400" font-family="Liberation Sans" fill="#217346" stroke="#217346" stroke-width="0.3" style="white-space:pre;">2</text></svg>
<svg class="tx" style="left:0;top:0" width="1376" height="768"><text x="19.00" y="325.88" text-anchor="middle" font-size="17.4" font-weight="400" font-family="Liberation Sans" fill="#217346" stroke="#217346" stroke-width="0.3" style="white-space:pre;">3</text></svg>
<svg class="tx" style="left:0;top:0" width="1376" height="768"><text x="19.00" y="354.07" text-anchor="middle" font-size="17.4" font-weight="400" font-family="Liberation Sans" fill="#217346" stroke="#217346" stroke-width="0.3" style="white-space:pre;">4</text></svg>
<svg class="tx" style="left:0;top:0" width="1376" height="768"><text x="19.00" y="382.26" text-anchor="middle" font-size="17.4" font-weight="400" font-family="Liberation Sans" fill="#222" stroke="#222" stroke-width="0.3" style="white-space:pre;">5</text></svg>
<svg class="tx" style="left:0;top:0" width="1376" height="768"><text x="19.00" y="410.45" text-anchor="middle" font-size="17.4" font-weight="400" font-family="Liberation Sans" fill="#222" stroke="#222" stroke-width="0.3" style="white-space:pre;">6</text></svg>
<svg class="tx" style="left:0;top:0" width="1376" height="768"><text x="19.00" y="438.64" text-anchor="middle" font-size="17.4" font-weight="400" font-family="Liberation Sans" fill="#222" stroke="#222" stroke-width="0.3" style="white-space:pre;">7</text></svg>
<svg class="tx" style="left:0;top:0" width="1376" height="768"><text x="19.00" y="466.83" text-anchor="middle" font-size="17.4" font-weight="400" font-family="Liberation Sans" fill="#222" stroke="#222" stroke-width="0.3" style="white-space:pre;">8</text></svg>
<svg class="tx" style="left:0;top:0" width="1376" height="768"><text x="19.00" y="495.02" text-anchor="middle" font-size="17.4" font-weight="400" font-family="Liberation Sans" fill="#222" stroke="#222" stroke-width="0.3" style="white-space:pre;">9</text></svg>
<svg class="tx" style="left:0;top:0" width="1376" height="768"><text x="19.00" y="523.21" text-anchor="middle" font-size="17.4" font-weight="400" font-family="Liberation Sans" fill="#222" stroke="#222" stroke-width="0.3" style="white-space:pre;">10</text></svg>
<svg class="tx" style="left:0;top:0" width="1376" height="768"><text x="19.00" y="551.40" text-anchor="middle" font-size="17.4" font-weight="400" font-family="Liberation Sans" fill="#222" stroke="#222" stroke-width="0.3" style="white-space:pre;">11</text></svg>
<svg class="tx" style="left:0;top:0" width="1376" height="768"><text x="19.00" y="579.59" text-anchor="middle" font-size="17.4" font-weight="400" font-family="Liberation Sans" fill="#222" stroke="#222" stroke-width="0.3" style="white-space:pre;">12</text></svg>
<svg class="tx" style="left:0;top:0" width="1376" height="768"><text x="19.00" y="607.78" text-anchor="middle" font-size="17.4" font-weight="400" font-family="Liberation Sans" fill="#222" stroke="#222" stroke-width="0.3" style="white-space:pre;">13</text></svg>
<svg class="tx" style="left:0;top:0" width="1376" height="768"><text x="19.00" y="635.97" text-anchor="middle" font-size="17.4" font-weight="400" font-family="Liberation Sans" fill="#222" stroke="#222" stroke-width="0.3" style="white-space:pre;">14</text></svg>
<svg class="tx" style="left:0;top:0" width="1376" height="768"><text x="19.00" y="664.16" text-anchor="middle" font-size="17.4" font-weight="400" font-family="Liberation Sans" fill="#222" stroke="#222" stroke-width="0.3" style="white-space:pre;">15</text></svg>
<svg class="tx" style="left:0;top:0" width="1376" height="768"><text x="19.00" y="692.35" text-anchor="middle" font-size="17.4" font-weight="400" font-family="Liberation Sans" fill="#222" stroke="#222" stroke-width="0.3" style="white-space:pre;">16</text></svg>
<svg class="tx" style="left:0;top:0" width="1376" height="768"><text x="19.00" y="720.54" text-anchor="middle" font-size="17.4" font-weight="400" font-family="Liberation Sans" fill="#222" stroke="#222" stroke-width="0.3" style="white-space:pre;">17</text></svg>
<svg class="tx" style="left:0;top:0" width="1376" height="768"><text x="60.60" y="270.20" text-anchor="middle" font-size="19.5" font-weight="400" font-family="Liberation Sans" fill="#111" stroke="#111" stroke-width="0.3" textLength="39.6" lengthAdjust="spacingAndGlyphs" style="white-space:pre;">Data</text></svg>
<svg class="tx" style="left:0;top:0" width="1376" height="768"><text x="101.15" y="298.50" text-anchor="middle" font-size="19.5" font-weight="400" font-family="Liberation Sans" fill="#111" stroke="#111" stroke-width="0.3" textLength="36.9" lengthAdjust="spacingAndGlyphs" style="white-space:pre;">123,</text></svg>
<svg class="tx" style="left:0;top:0" width="1376" height="768"><text x="100.65" y="326.50" text-anchor="middle" font-size="19.5" font-weight="400" font-family="Liberation Sans" fill="#111" stroke="#111" stroke-width="0.3" textLength="37.9" lengthAdjust="spacingAndGlyphs" style="white-space:pre;">890;</text></svg>
<svg class="tx" style="left:0;top:0" width="1376" height="768"><text x="100.65" y="354.60" text-anchor="middle" font-size="19.5" font-weight="400" font-family="Liberation Sans" fill="#111" stroke="#111" stroke-width="0.3" textLength="37.9" lengthAdjust="spacingAndGlyphs" style="white-space:pre;">456,</text></svg>
<svg class="tx" style="left:0;top:0" width="1376" height="768"><text x="201.05" y="298.50" text-anchor="middle" font-size="19.5" font-weight="400" font-family="Liberation Sans" fill="#111" stroke="#111" stroke-width="0.3" textLength="150.9" lengthAdjust="spacingAndGlyphs" style="white-space:pre;">John Smith, 4567</text></svg>
<svg class="tx" style="left:0;top:0" width="1376" height="768"><text x="196.10" y="326.50" text-anchor="middle" font-size="19.5" font-weight="400" font-family="Liberation Sans" fill="#111" stroke="#111" stroke-width="0.3" textLength="139.2" lengthAdjust="spacingAndGlyphs" style="white-space:pre;">Sarah Lee; 1012</text></svg>
<svg class="tx" style="left:0;top:0" width="1376" height="768"><text x="202.90" y="354.60" text-anchor="middle" font-size="19.5" font-weight="400" font-family="Liberation Sans" fill="#111" stroke="#111" stroke-width="0.3" textLength="150.8" lengthAdjust="spacingAndGlyphs" style="white-space:pre;">Mark Davis, 7890</text></svg>
<div class="a" style="left:0px;top:715px;width:1376px;height:29.6px;background:#e6e6e6"></div>
<div class="a" style="left:0px;top:714.6px;width:1376px;height:1.4px;background:#b4b4b4"></div>
<div class="a" style="left:0px;top:744.6px;width:1376px;height:1.3px;background:#cdcdcd"></div>
<div class="a" style="left:35.5px;top:275px;width:264.5px;height:87.5px;border:2px solid #217346"></div>
<div class="a" style="left:294.8px;top:357.8px;width:7.4px;height:6.4px;background:#217346;border:1px solid #e8f4ec"></div>
<svg style="left:0;top:0" width="1376" height="768" viewBox="0 0 1376 768"><rect x="303" y="364.5" width="23" height="22.2" fill="#f7f7f7" stroke="#bdbdbd" stroke-width="1.4"/><rect x="306" y="369" width="8" height="12" fill="#fff" stroke="#8a8a8a" stroke-width="0.8"/><rect x="306" y="369" width="8" height="2.2" fill="#4d7fbf"/><rect x="313" y="368" width="9" height="6" fill="#fff" stroke="#9a9a9a" stroke-width="0.8"/><path d="M315.5 378.5H320M315.5 380.5H320" stroke="#777" stroke-width="0.9"/></svg>
<div class="a" style="left:1350.6px;top:223px;width:25.4px;height:492px;background:#e6e6e6"></div>
<div class="a" style="left:1354.4px;top:224.4px;width:18.4px;height:18.3px;background:#fff;border:1px solid #c6c6c6"></div>
<div class="a" style="left:1354.4px;top:243px;width:18.4px;height:384px;background:#fff;border:1px solid #c6c6c6;border-top:none"></div>
<div class="a" style="left:1354.4px;top:627px;width:18.4px;height:69.2px;background:#d9d9d9"></div>
<div class="a" style="left:1354.4px;top:696.2px;width:18.4px;height:18.8px;background:#fff;border:1px solid #c6c6c6"></div>
<svg style="left:0;top:0" width="1376" height="768" viewBox="0 0 1376 768"><path d="M1359.5 236.5H1367.5L1363.5 232.3Z" fill="#777"/><path d="M1359.5 703.5H1367.5L1363.5 707.7Z" fill="#777"/></svg>
<div class="a" style="left:101.8px;top:715px;width:74.8px;height:26.2px;background:#fff;border-left:1px solid #c8c8c8;border-right:1px solid #c8c8c8"></div>
<div class="a" style="left:101.8px;top:739.2px;width:74.8px;height:2.2px;background:#217346"></div>
<svg class="tx" style="left:0;top:0" width="1376" height="768"><text x="138.60" y="733.50" text-anchor="middle" font-size="15.5" font-weight="700" font-family="Liberation Sans" fill="#217346" stroke="#217346" stroke-width="0.3" textLength="50.8" lengthAdjust="spacingAndGlyphs" style="white-space:pre;">Sayfa1</text></svg>
<div class="a" style="left:838.5px;top:720.3px;width:18.6px;height:19.1px;background:#fff;border:1px solid #bdbdbd"></div>
<div class="a" style="left:858px;top:720.3px;width:442.6px;height:19.1px;background:#fff;border:1px solid #bdbdbd"></div>
<div class="a" style="left:1300.6px;top:720.3px;width:30.6px;height:19.1px;background:#d9d9d9"></div>
<div class="a" style="left:1331.2px;top:720.3px;width:19.5px;height:19.1px;background:#fff;border:1px solid #bdbdbd"></div>
<svg style="left:0;top:0" width="1376" height="768" viewBox="0 0 1376 768"><path d="M32.6 726V733.5L27.5 729.8Z" fill="#b5b5b5"/><path d="M56 726V733.5L61 729.8Z" fill="#b5b5b5"/><circle cx="219" cy="730.4" r="9" fill="none" stroke="#777" stroke-width="1.3"/><path d="M219 725V736M213.5 730.4H224.5" stroke="#555" stroke-width="1.4"/><circle cx="822" cy="724.5" r="1.1" fill="#999"/><circle cx="822" cy="729.3" r="1.1" fill="#999"/><circle cx="822" cy="734.2" r="1.1" fill="#999"/><path d="M850.1 725.3V734L845 729.65Z" fill="#555"/></svg>
<svg style="left:0;top:0" width="1376" height="768" viewBox="0 0 1376 768"><path d="M1338.5 725.5V734L1343.5 729.75Z" fill="#555"/></svg>
<svg class="tx" style="left:0;top:0" width="1376" height="768"><text x="24.90" y="762.60" text-anchor="middle" font-size="13.3" font-weight="400" font-family="Liberation Sans" fill="#333" stroke="#333" stroke-width="0.3" textLength="34.4" lengthAdjust="spacingAndGlyphs" style="white-space:pre;">Sayfa</text></svg>
<div class="a" style="left:1048.6px;top:745px;width:37.9px;height:23px;background:#d4d4d4"></div>
<svg style="left:0;top:0" width="1376" height="768" viewBox="0 0 1376 768"><rect x="1060" y="750.5" width="14.5" height="13.5" fill="none" stroke="#555" stroke-width="1.1"/><path d="M1064.8 750.5V764M1069.7 750.5V764M1060 755H1074.5M1060 759.5H1074.5" stroke="#555" stroke-width="1"/><rect x="1098.5" y="750.5" width="15" height="13.5" fill="none" stroke="#555" stroke-width="1.1"/><rect x="1101.5" y="753" width="9" height="8.5" fill="none" stroke="#555" stroke-width="1"/><path d="M1103.5 756H1108.5M1103.5 758.5H1108.5" stroke="#555" stroke-width="0.9"/><path d="M1137 750.5H1152.5V764H1137Z" fill="none" stroke="#555" stroke-width="1.1"/><path d="M1141 750.5V757.5H1148.5V750.5" fill="none" stroke="#555" stroke-width="1"/><path d="M1169.7 757.4H1178.2" stroke="#444" stroke-width="1.3"/><path d="M1183 757.4H1294.5" stroke="#b5b5b5" stroke-width="1"/><rect x="1236.5" y="750.8" width="6" height="13.2" fill="#666"/><path d="M1300.6 757.4H1310.4M1305.5 752.5V762.3" stroke="#444" stroke-width="1.3"/></svg>
<svg class="tx" style="left:0;top:0" width="1376" height="768"><text x="1340.60" y="763.00" text-anchor="middle" font-size="14.5" font-weight="400" font-family="Liberation Sans" fill="#333" stroke="#333" stroke-width="0.3" textLength="34.2" lengthAdjust="spacingAndGlyphs" style="white-space:pre;">100%</text></svg>
<div class="a" style="left:507px;top:174px;width:558.8px;height:507.5px;background:#f0f0f0;border:1px solid #5a5a5a;border-right-width:2px;border-bottom-width:2px;box-shadow:0 5px 10px rgba(0,0,0,0.20),-1px 1px 5px rgba(0,0,0,0.16)"></div>
<div class="a" style="left:508px;top:175px;width:556px;height:33.099999999999994px;background:#fff"></div>
<svg class="tx" style="left:0;top:0" width="1376" height="768"><text x="670.35" y="197.40" text-anchor="middle" font-size="15.3" font-weight="400" font-family="Liberation Sans" fill="#141414" stroke="#141414" stroke-width="0.3" textLength="313.9" lengthAdjust="spacingAndGlyphs" style="white-space:pre;">Metni Sütunlara Dönüştür Sihirbazı - Adım 2 / 3</text></svg>
<svg class="tx" style="left:0;top:0" width="1376" height="768"><text x="980.15" y="197.50" text-anchor="middle" font-size="16" font-weight="400" font-family="Liberation Sans" fill="#141414" stroke="#141414" stroke-width="0.3" textLength="9.3" lengthAdjust="spacingAndGlyphs" style="white-space:pre;">?</text></svg>
<svg style="left:0;top:0" width="1376" height="768" viewBox="0 0 1376 768"><path d="M1030.4 185.5L1042 197.3M1042 185.5L1030.4 197.3" stroke="#222" stroke-width="1.5"/><circle cx="524.15" cy="251.1" r="7.3" fill="#fff" stroke="#222" stroke-width="1.5"/><circle cx="524.15" cy="251.1" r="4.3" fill="#1a1a1a"/></svg>
<svg class="tx" style="left:0;top:0" width="1376" height="768"><text x="706.85" y="230.90" text-anchor="middle" font-size="15.3" font-weight="400" font-family="Liberation Sans" fill="#141414" stroke="#141414" stroke-width="0.3" textLength="382.7" lengthAdjust="spacingAndGlyphs" style="white-space:pre;">Metni sütunlara dönüştür sihirbazı önun insıln bır yiiniştiıı.</text></svg>
<svg class="tx" style="left:0;top:0" width="1376" height="768"><text x="585.70" y="256.80" text-anchor="middle" font-size="15.3" font-weight="400" font-family="Liberation Sans" fill="#141414" stroke="#141414" stroke-width="0.3" textLength="97.4" lengthAdjust="spacingAndGlyphs" style="white-space:pre;">Sınırlandırılmış</text></svg>
<svg class="tx" style="left:0;top:0" width="1376" height="768"><text x="720.65" y="279.10" text-anchor="middle" font-size="15.3" font-weight="400" font-family="Liberation Sans" fill="#141414" stroke="#141414" stroke-width="0.3" textLength="367.7" lengthAdjust="spacingAndGlyphs" style="white-space:pre;">Betki oir sınırlayıcıları ışst ipirmi sütunulara tırınrundur.</text></svg>
<div class="a" style="left:516.7px;top:304.4px;width:140.1px;height:141.3px;border:1px solid #d5d5d5"></div>
<div class="a" style="left:521px;top:298px;width:84px;height:14px;background:#f0f0f0"></div>
<svg class="tx" style="left:0;top:0" width="1376" height="768"><text x="562.50" y="309.60" text-anchor="middle" font-size="14.5" font-weight="400" font-family="Liberation Sans" fill="#141414" stroke="#141414" stroke-width="0.3" textLength="79.6" lengthAdjust="spacingAndGlyphs" style="white-space:pre;">Sınırlayıcılar</text></svg>
<svg class="tx" style="left:0;top:0" width="1376" height="768"><text x="569.95" y="335.70" text-anchor="middle" font-size="15.3" font-weight="400" font-family="Liberation Sans" fill="#141414" stroke="#141414" stroke-width="0.3" textLength="43.3" lengthAdjust="spacingAndGlyphs" style="white-space:pre;">Sekme</text></svg>
<svg class="tx" style="left:0;top:0" width="1376" height="768"><text x="593.80" y="359.90" text-anchor="middle" font-size="15.3" font-weight="400" font-family="Liberation Sans" fill="#141414" stroke="#141414" stroke-width="0.3" textLength="91.0" lengthAdjust="spacingAndGlyphs" style="white-space:pre;">Noktalı Virgül</text></svg>
<svg class="tx" style="left:0;top:0" width="1376" height="768"><text x="568.25" y="382.70" text-anchor="middle" font-size="15.3" font-weight="400" font-family="Liberation Sans" fill="#141414" stroke="#141414" stroke-width="0.3" textLength="39.9" lengthAdjust="spacingAndGlyphs" style="white-space:pre;">Virgül</text></svg>
<svg class="tx" style="left:0;top:0" width="1376" height="768"><text x="570.95" y="406.40" text-anchor="middle" font-size="15.3" font-weight="400" font-family="Liberation Sans" fill="#141414" stroke="#141414" stroke-width="0.3" textLength="45.3" lengthAdjust="spacingAndGlyphs" style="white-space:pre;">Boşluk</text></svg>
<svg class="tx" style="left:0;top:0" width="1376" height="768"><text x="568.25" y="432.20" text-anchor="middle" font-size="15.3" font-weight="400" font-family="Liberation Sans" fill="#141414" stroke="#141414" stroke-width="0.3" textLength="39.9" lengthAdjust="spacingAndGlyphs" style="white-space:pre;">Diğer:</text></svg>
<div class="a" style="left:602.1px;top:416.1px;width:43.5px;height:23.9px;background:#fff;border:1px solid #c4c4c4"></div>
<div class="t" style="left:606.40px;top:423.30px;font-size:14px;color:#141414;font-weight:400;font-family:'Liberation Sans';">[</div>
<svg style="left:0;top:0" width="1376" height="768" viewBox="0 0 1376 768"><rect x="528.5" y="321.9" width="14.8" height="15" fill="#fff" stroke="#222" stroke-width="1.1"/><path d="M549.1 338.2H557.5" stroke="#222" stroke-width="1.1"/><rect x="528.5" y="346.0" width="14.8" height="15" fill="#fff" stroke="#222" stroke-width="1.1"/><path d="M530.5 353.0L534.4 357.9L542 348.9" fill="none" stroke="#111" stroke-width="1.3"/><rect x="528.5" y="370.0" width="14.8" height="15" fill="#fff" stroke="#222" stroke-width="1.1"/><path d="M530.5 377.0L534.4 381.9L542 372.9" fill="none" stroke="#111" stroke-width="1.3"/><path d="M549.1 385.2H558.5" stroke="#222" stroke-width="1.1"/><rect x="528.5" y="393.7" width="14.8" height="15" fill="#fff" stroke="#222" stroke-width="1.1"/><rect x="528.5" y="419.6" width="14.8" height="15" fill="#fff" stroke="#222" stroke-width="1.1"/><rect x="670.8" y="340.9" width="15" height="14.8" fill="#fff" stroke="#222" stroke-width="1.1"/></svg>
<svg class="tx" style="left:0;top:0" width="1376" height="768"><text x="802.65" y="353.50" text-anchor="middle" font-size="15" font-weight="400" font-family="Liberation Sans" fill="#141414" stroke="#141414" stroke-width="0.3" textLength="225.1" lengthAdjust="spacingAndGlyphs" style="white-space:pre;">Ardışık sınırlayıcıları tek olarak işle</text></svg>
<svg class="tx" style="left:0;top:0" width="1376" height="768"><text x="726.95" y="391.10" text-anchor="middle" font-size="15.3" font-weight="400" font-family="Liberation Sans" fill="#141414" stroke="#141414" stroke-width="0.3" textLength="115.1" lengthAdjust="spacingAndGlyphs" style="white-space:pre;">Metin niteleyicisi:</text></svg>
<div class="a" style="left:794.3px;top:372.8px;width:129.7px;height:25.5px;background:#fff;border:1px solid #b0b0b0"></div>
<div class="a" style="left:902.2px;top:372.8px;width:21.8px;height:25.5px;background:#e1e1e1;border:1px solid #b0b0b0"></div>
<div class="t" style="left:798.70px;top:379.10px;font-size:14px;color:#141414;font-weight:400;font-family:'Liberation Sans';">"</div>
<svg style="left:0;top:0" width="1376" height="768" viewBox="0 0 1376 768"><path d="M908 383L913 388L918 383" fill="none" stroke="#555" stroke-width="1.2"/></svg>
<div class="a" style="left:516.9px;top:463.8px;width:537.9px;height:162.2px;border:1px solid #d8d8d8"></div>
<div class="a" style="left:521px;top:459px;width:96px;height:14px;background:#f0f0f0"></div>
<svg class="tx" style="left:0;top:0" width="1376" height="768"><text x="568.30" y="469.20" text-anchor="middle" font-size="15" font-weight="400" font-family="Liberation Sans" fill="#141414" stroke="#141414" stroke-width="0.3" textLength="91.8" lengthAdjust="spacingAndGlyphs" style="white-space:pre;">Veri Önizleme</text></svg>
<div class="a" style="left:527.8px;top:513.8px;width:494.6px;height:86px;background:#fff;border:2px solid #1e1e1e;border-bottom:none"></div>
<div class="a" style="left:570.1px;top:513.8px;width:1.9px;height:86px;background:#1e1e1e"></div>
<div class="a" style="left:684.8px;top:513.8px;width:1.9px;height:86px;background:#1e1e1e"></div>
<div class="a" style="left:527.5px;top:599.6px;width:497px;height:20px;background:#f0f0f0"></div>
<svg class="tx" style="left:0;top:0" width="1376" height="768"><text x="544.10" y="532.90" text-anchor="middle" font-size="16" font-weight="700" font-family="Liberation Mono" fill="#111" stroke="#111" stroke-width="0.3" textLength="29.4" lengthAdjust="spacingAndGlyphs" style="white-space:pre;">123</text></svg>
<svg class="tx" style="left:0;top:0" width="1376" height="768"><text x="621.50" y="532.90" text-anchor="middle" font-size="16" font-weight="700" font-family="Liberation Mono" fill="#111" stroke="#111" stroke-width="0.3" textLength="99.6" lengthAdjust="spacingAndGlyphs" style="white-space:pre;">John Smith</text></svg>
<svg class="tx" style="left:0;top:0" width="1376" height="768"><text x="706.35" y="532.90" text-anchor="middle" font-size="16" font-weight="700" font-family="Liberation Mono" fill="#111" stroke="#111" stroke-width="0.3" textLength="38.3" lengthAdjust="spacingAndGlyphs" style="white-space:pre;">4567</text></svg>
<svg class="tx" style="left:0;top:0" width="1376" height="768"><text x="544.10" y="551.90" text-anchor="middle" font-size="16" font-weight="700" font-family="Liberation Mono" fill="#111" stroke="#111" stroke-width="0.3" textLength="29.4" lengthAdjust="spacingAndGlyphs" style="white-space:pre;">890</text></svg>
<svg class="tx" style="left:0;top:0" width="1376" height="768"><text x="616.30" y="551.90" text-anchor="middle" font-size="16" font-weight="700" font-family="Liberation Mono" fill="#111" stroke="#111" stroke-width="0.3" textLength="89.2" lengthAdjust="spacingAndGlyphs" style="white-space:pre;">Sarah Lee</text></svg>
<svg class="tx" style="left:0;top:0" width="1376" height="768"><text x="706.35" y="551.90" text-anchor="middle" font-size="16" font-weight="700" font-family="Liberation Mono" fill="#111" stroke="#111" stroke-width="0.3" textLength="38.3" lengthAdjust="spacingAndGlyphs" style="white-space:pre;">1012</text></svg>
<svg class="tx" style="left:0;top:0" width="1376" height="768"><text x="544.10" y="571.40" text-anchor="middle" font-size="16" font-weight="700" font-family="Liberation Mono" fill="#111" stroke="#111" stroke-width="0.3" textLength="29.4" lengthAdjust="spacingAndGlyphs" style="white-space:pre;">456</text></svg>
<svg class="tx" style="left:0;top:0" width="1376" height="768"><text x="620.75" y="571.40" text-anchor="middle" font-size="16" font-weight="700" font-family="Liberation Mono" fill="#111" stroke="#111" stroke-width="0.3" textLength="99.3" lengthAdjust="spacingAndGlyphs" style="white-space:pre;">Mark Davis</text></svg>
<svg class="tx" style="left:0;top:0" width="1376" height="768"><text x="706.35" y="571.40" text-anchor="middle" font-size="16" font-weight="700" font-family="Liberation Mono" fill="#111" stroke="#111" stroke-width="0.3" textLength="38.3" lengthAdjust="spacingAndGlyphs" style="white-space:pre;">7890</text></svg>
<svg style="left:0;top:0" width="1376" height="768" viewBox="0 0 1376 768"><path d="M542.5 605L536 609.5L542.5 614" fill="none" stroke="#b0b0b0" stroke-width="1.6"/><rect x="550.6" y="600.7" width="20.7" height="17.5" fill="#cdcdcd"/><path d="M1007.8 605L1014.3 609.5L1007.8 614" fill="none" stroke="#b0b0b0" stroke-width="1.6"/><path d="M1028.8 529L1033.3 523.3L1037.8 529" fill="none" stroke="#444" stroke-width="2.2"/><rect x="1023.8" y="536.3" width="18.7" height="20.4" fill="#cdcdcd"/><path d="M1028.8 585.3L1033.3 591.3L1037.8 585.3" fill="none" stroke="#444" stroke-width="2.2"/></svg>
<div class="a" style="left:645px;top:643px;width:92.39999999999998px;height:27.4px;background:#e1e1e1;border:1px solid #adadad"></div>
<svg class="tx" style="left:0;top:0" width="1376" height="768"><text x="691.25" y="662.10" text-anchor="middle" font-size="15" font-weight="400" font-family="Liberation Sans" fill="#141414" stroke="#141414" stroke-width="0.3" textLength="40.1" lengthAdjust="spacingAndGlyphs" style="white-space:pre;">&lt; Geri</text></svg>
<div class="a" style="left:750.2px;top:643px;width:92.79999999999995px;height:27.4px;background:#e1e1e1;border:2px solid #1f5fa8"></div>
<svg class="tx" style="left:0;top:0" width="1376" height="768"><text x="795.30" y="662.10" text-anchor="middle" font-size="15" font-weight="400" font-family="Liberation Sans" fill="#141414" stroke="#141414" stroke-width="0.3" textLength="37.4" lengthAdjust="spacingAndGlyphs" style="white-space:pre;">İleri &gt;</text></svg>
<div class="a" style="left:855.8px;top:643px;width:93.40000000000009px;height:27.4px;background:#e1e1e1;border:1px solid #adadad"></div>
<svg class="tx" style="left:0;top:0" width="1376" height="768"><text x="901.75" y="662.10" text-anchor="middle" font-size="15" font-weight="400" font-family="Liberation Sans" fill="#141414" stroke="#141414" stroke-width="0.3" textLength="26.3" lengthAdjust="spacingAndGlyphs" style="white-space:pre;">Son</text></svg>
<div class="a" style="left:961.4px;top:643px;width:93.39999999999998px;height:27.4px;background:#e1e1e1;border:1px solid #adadad"></div>
<svg class="tx" style="left:0;top:0" width="1376" height="768"><text x="1008.20" y="662.10" text-anchor="middle" font-size="15" font-weight="400" font-family="Liberation Sans" fill="#141414" stroke="#141414" stroke-width="0.3" textLength="29.6" lengthAdjust="spacingAndGlyphs" style="white-space:pre;">İptal</text></svg>
<svg style="left:0;top:0" width="1376" height="768" viewBox="0 0 1376 768"><path d="M684 664H694" stroke="#222" stroke-width="1.1"/><path d="M890 664H898" stroke="#222" stroke-width="1.1"/></svg>
</body></html>
